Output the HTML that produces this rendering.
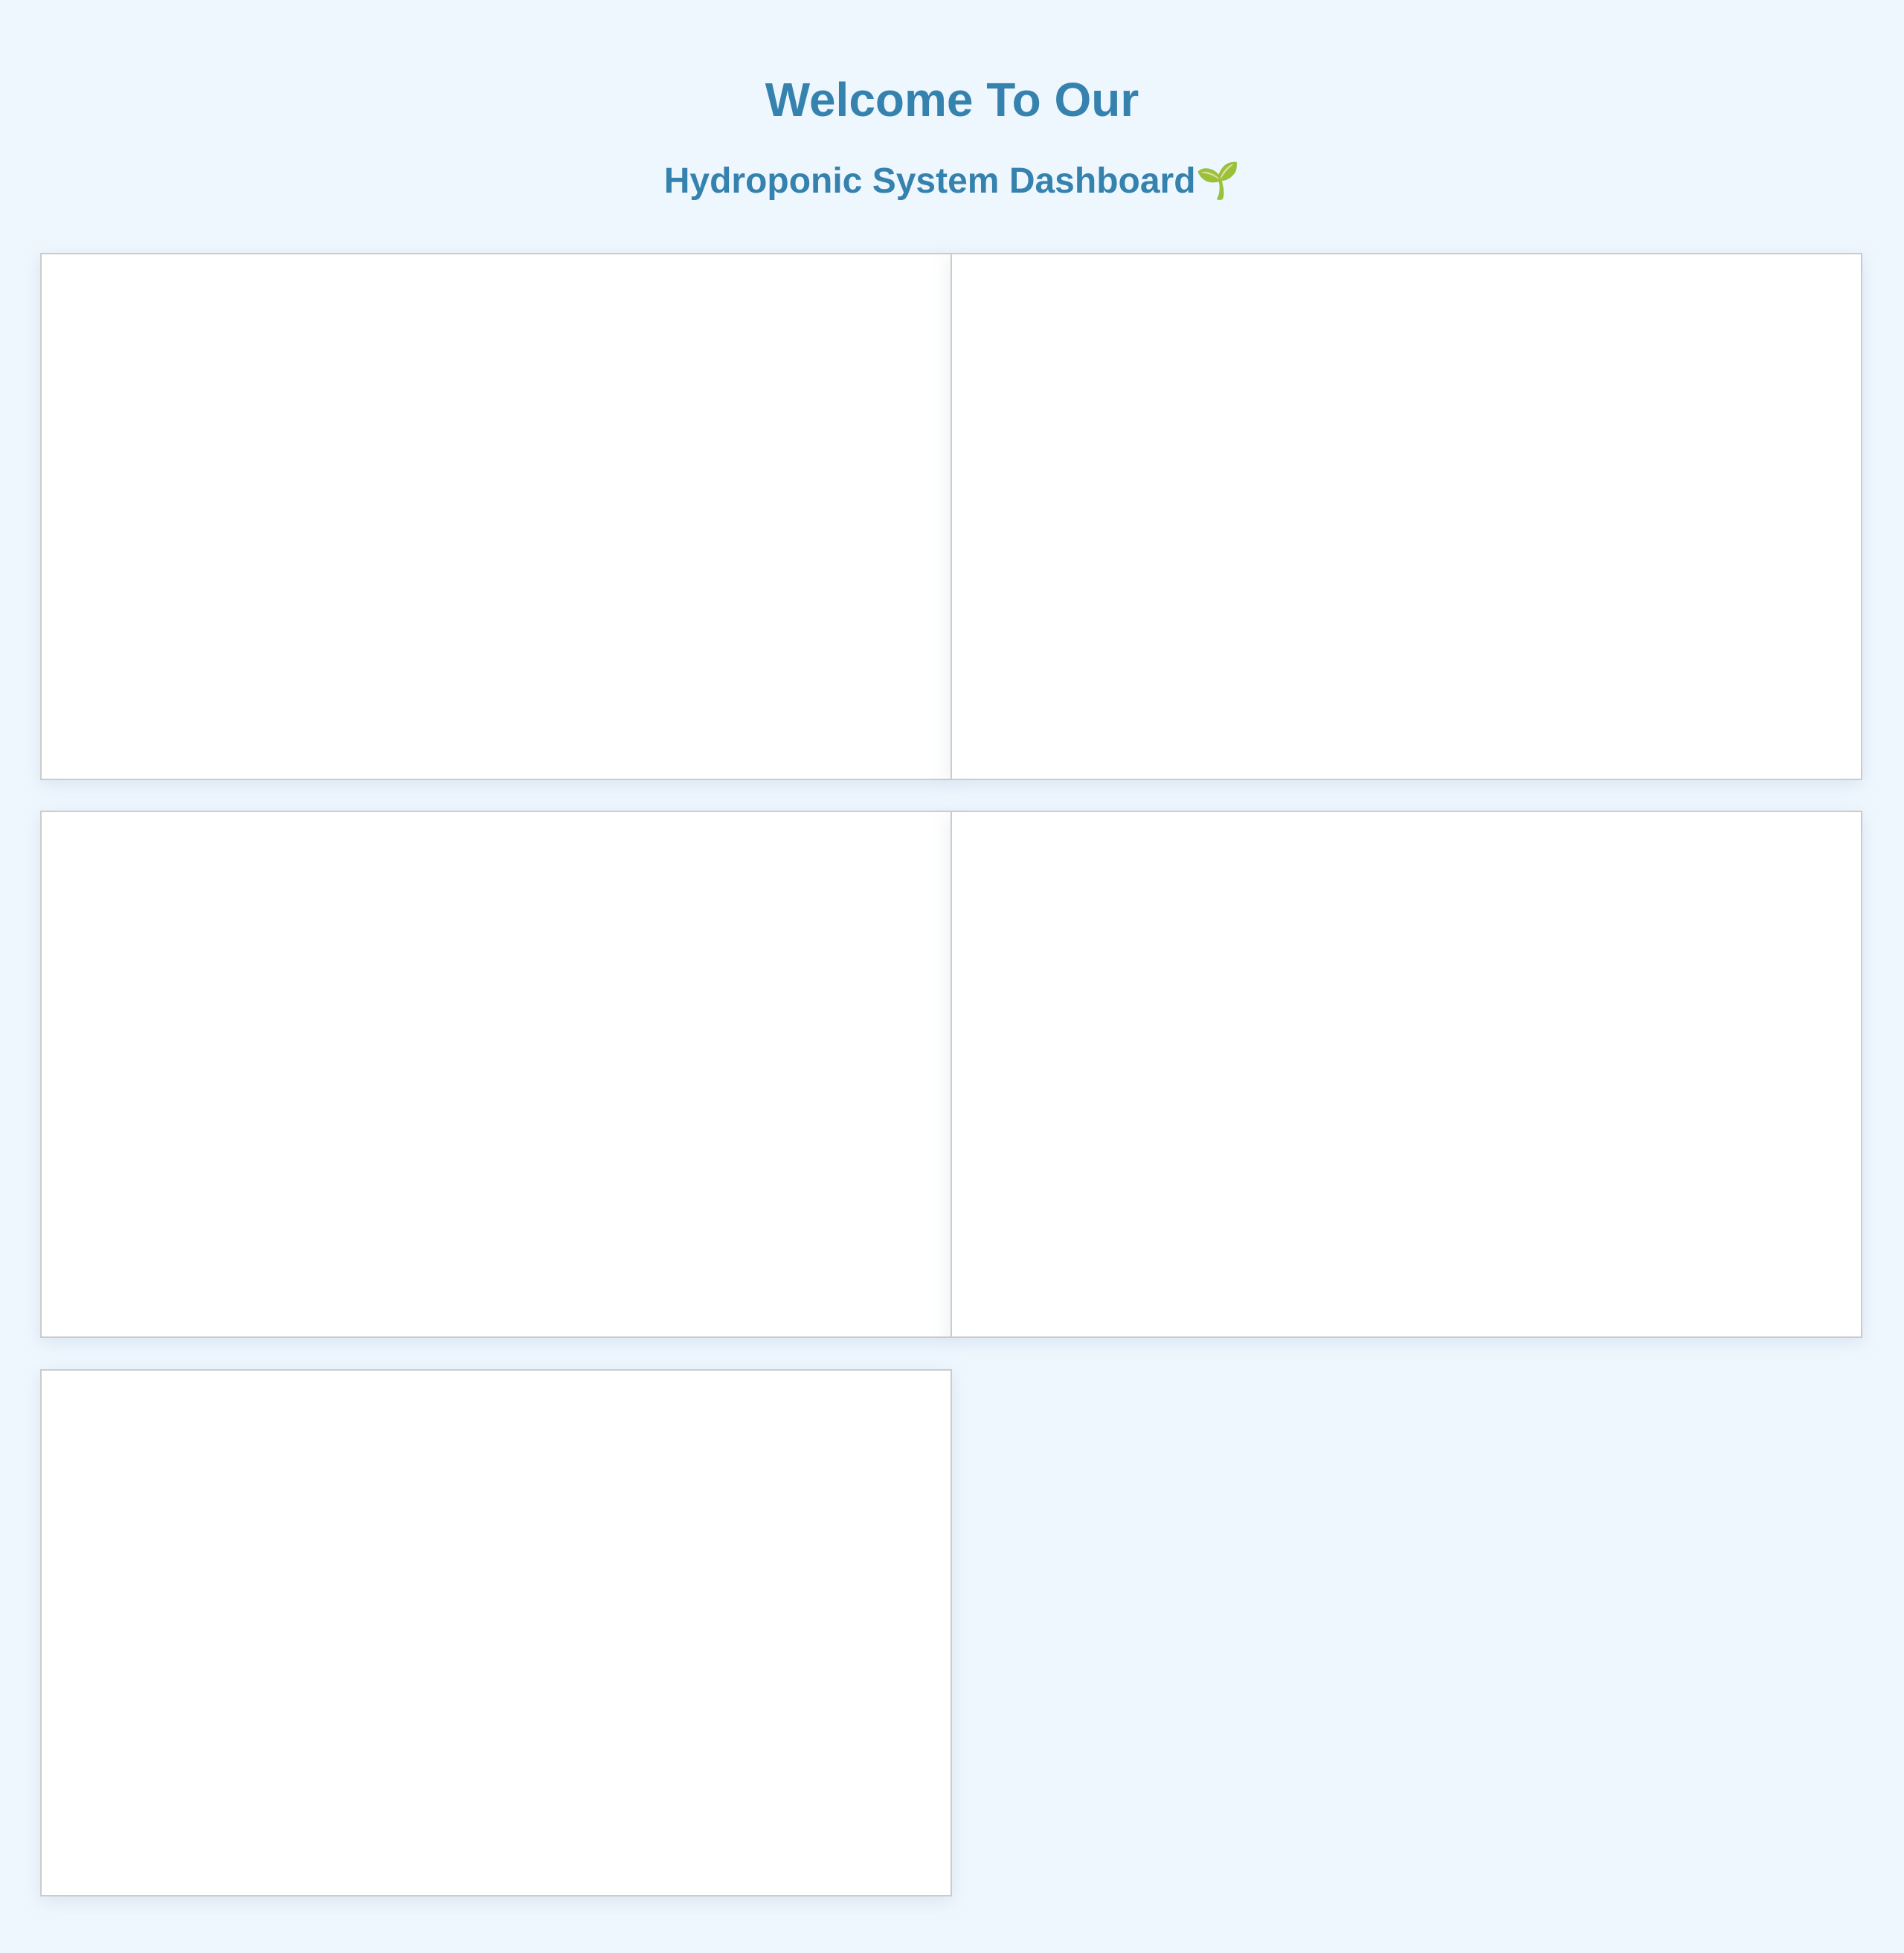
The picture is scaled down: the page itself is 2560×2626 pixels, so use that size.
<!DOCTYPE html>
<html><head><meta charset="utf-8"><style>
html,body{margin:0;padding:0;}
body{width:2560px;height:2626px;background:#eff7fe;font-family:"Liberation Sans",Arial,sans-serif;position:relative;overflow:hidden;}
h1{position:absolute;left:0;width:2560px;top:96px;margin:0;text-align:center;font-size:64px;line-height:76px;color:#3682ae;font-weight:bold;}
h2{position:absolute;left:0;width:2560px;top:213px;margin:0;text-align:center;font-size:48px;line-height:60px;color:#3682ae;font-weight:bold;}
.box{position:absolute;width:1222px;height:705px;background:#fff;border:2px solid #cbcbcb;box-shadow:0 6px 24px rgba(120,150,180,0.18);}
</style></head><body>
<h1>Welcome To Our</h1>
<h2>Hydroponic System Dashboard<span style="font-family:'Noto Color Emoji','DejaVu Sans',sans-serif;color:#5aa02c">🌱</span></h2>
<div class="box" style="left:54px;top:340px"></div>
<div class="box" style="left:1278px;top:340px"></div>
<div class="box" style="left:54px;top:1090px"></div>
<div class="box" style="left:1278px;top:1090px"></div>
<div class="box" style="left:54px;top:1841px"></div>
</body></html>
